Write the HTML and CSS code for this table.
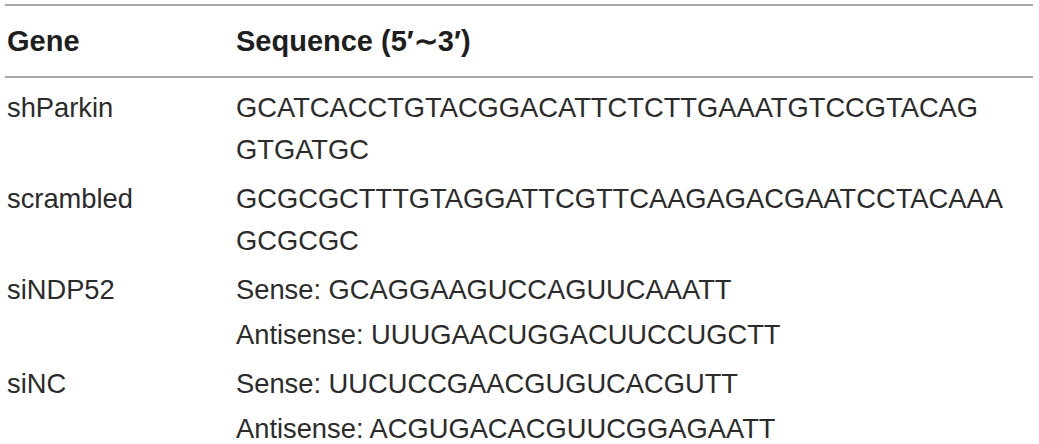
FILE: index.html
```html
<!DOCTYPE html>
<html>
<head>
<meta charset="utf-8">
<link rel="stylesheet" href="styles.css">
</head>
<body>
<table class="seq-table">
  <thead>
    <tr>
      <th class="col-gene">Gene</th>
      <th class="col-seq">Sequence (5′∼3′)</th>
    </tr>
  </thead>
  <tbody>
    <tr class="first">
      <td>shParkin</td>
      <td>GCATCACCTGTACGGACATTCTCTTGAAATGTCCGTACAG<br>GTGATGC</td>
    </tr>
    <tr>
      <td>scrambled</td>
      <td>GCGCGCTTTGTAGGATTCGTTCAAGAGACGAATCCTACAAA<br>GCGCGC</td>
    </tr>
    <tr>
      <td>siNDP52</td>
      <td><div class="line">Sense: GCAGGAAGUCCAGUUCAAATT</div><div class="line">Antisense: UUUGAACUGGACUUCCUGCTT</div></td>
    </tr>
    <tr>
      <td>siNC</td>
      <td><div class="line">Sense: UUCUCCGAACGUGUCACGUTT</div><div class="line">Antisense: ACGUGACACGUUCGGAGAATT</div></td>
    </tr>
  </tbody>
</table>
</body>
</html>
```
FILE: styles.css
```css
html, body {
  margin: 0;
  padding: 0;
  background: #ffffff;
}
body {
  padding: 4px 6px 0 5px;
  font-family: "Liberation Sans", Arial, sans-serif;
  color: #2b2b2b;
}
.seq-table {
  width: 1028px;
  border-collapse: collapse;
  font-size: 27.3px;
}
.seq-table th {
  text-align: left;
  font-weight: bold;
  font-size: 29px;
  color: #1e1e1e;
  height: 70px;
  padding: 0 0 0 2px;
  border-top: 2px solid #a8a8a8;
  border-bottom: 2px solid #a8a8a8;
  vertical-align: middle;
}
.seq-table .col-gene {
  width: 227px;
}
.seq-table td {
  vertical-align: top;
  padding: 4px 0 3px 2px;
  line-height: 42px;
  white-space: nowrap;
}
.seq-table tr.first td {
  padding-top: 9px;
}
.line + .line {
  margin-top: 3px;
}
```
